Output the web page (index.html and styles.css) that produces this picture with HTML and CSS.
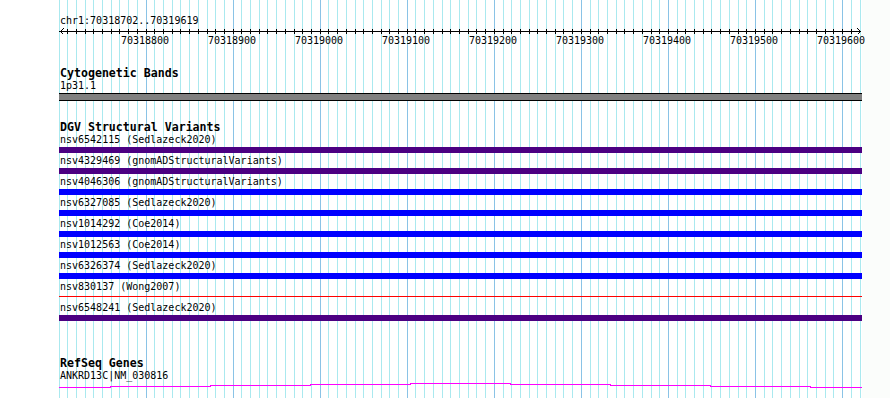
FILE: index.html
```html
<!DOCTYPE html>
<html>
<head>
<meta charset="utf-8">
<title>Genome browser</title>
<link rel="stylesheet" href="styles.css">
</head>
<body>
<div class="panel">
  <svg class="grid" width="862" height="398" viewBox="0 0 862 398" shape-rendering="crispEdges">
    <g class="minor">
      <rect x="59" width="1" height="398"/><rect x="67" width="1" height="398"/><rect x="76" width="1" height="398"/><rect x="85" width="1" height="398"/><rect x="93" width="1" height="398"/><rect x="102" width="1" height="398"/><rect x="111" width="1" height="398"/><rect x="119" width="1" height="398"/><rect x="128" width="1" height="398"/><rect x="137" width="1" height="398"/>
      <rect x="154" width="1" height="398"/><rect x="163" width="1" height="398"/><rect x="172" width="1" height="398"/><rect x="180" width="1" height="398"/><rect x="189" width="1" height="398"/><rect x="198" width="1" height="398"/><rect x="207" width="1" height="398"/><rect x="215" width="1" height="398"/><rect x="224" width="1" height="398"/>
      <rect x="241" width="1" height="398"/><rect x="250" width="1" height="398"/><rect x="259" width="1" height="398"/><rect x="267" width="1" height="398"/><rect x="276" width="1" height="398"/><rect x="285" width="1" height="398"/><rect x="294" width="1" height="398"/><rect x="302" width="1" height="398"/><rect x="311" width="1" height="398"/>
      <rect x="328" width="1" height="398"/><rect x="337" width="1" height="398"/><rect x="346" width="1" height="398"/><rect x="355" width="1" height="398"/><rect x="363" width="1" height="398"/><rect x="372" width="1" height="398"/><rect x="381" width="1" height="398"/><rect x="389" width="1" height="398"/><rect x="398" width="1" height="398"/>
      <rect x="415" width="1" height="398"/><rect x="424" width="1" height="398"/><rect x="433" width="1" height="398"/><rect x="442" width="1" height="398"/><rect x="450" width="1" height="398"/><rect x="459" width="1" height="398"/><rect x="468" width="1" height="398"/><rect x="476" width="1" height="398"/><rect x="485" width="1" height="398"/>
      <rect x="503" width="1" height="398"/><rect x="511" width="1" height="398"/><rect x="520" width="1" height="398"/><rect x="529" width="1" height="398"/><rect x="537" width="1" height="398"/><rect x="546" width="1" height="398"/><rect x="555" width="1" height="398"/><rect x="563" width="1" height="398"/><rect x="572" width="1" height="398"/>
      <rect x="590" width="1" height="398"/><rect x="598" width="1" height="398"/><rect x="607" width="1" height="398"/><rect x="616" width="1" height="398"/><rect x="624" width="1" height="398"/><rect x="633" width="1" height="398"/><rect x="642" width="1" height="398"/><rect x="651" width="1" height="398"/><rect x="659" width="1" height="398"/>
      <rect x="677" width="1" height="398"/><rect x="685" width="1" height="398"/><rect x="694" width="1" height="398"/><rect x="703" width="1" height="398"/><rect x="711" width="1" height="398"/><rect x="720" width="1" height="398"/><rect x="729" width="1" height="398"/><rect x="738" width="1" height="398"/><rect x="746" width="1" height="398"/>
      <rect x="764" width="1" height="398"/><rect x="772" width="1" height="398"/><rect x="781" width="1" height="398"/><rect x="790" width="1" height="398"/><rect x="799" width="1" height="398"/><rect x="807" width="1" height="398"/><rect x="816" width="1" height="398"/><rect x="825" width="1" height="398"/><rect x="833" width="1" height="398"/>
      <rect x="851" width="1" height="398"/><rect x="860" width="1" height="398"/>
    </g>
    <g class="major">
      <rect x="146" width="1" height="398"/><rect x="233" width="1" height="398"/><rect x="320" width="1" height="398"/><rect x="407" width="1" height="398"/><rect x="494" width="1" height="398"/><rect x="581" width="1" height="398"/><rect x="668" width="1" height="398"/><rect x="755" width="1" height="398"/><rect x="842" width="1" height="398"/>
    </g>
  </svg>

  <div class="tracks">
    <div class="locus">chr1:70318702..70319619</div>
    <svg class="ruler" width="862" height="22" viewBox="0 0 862 22" shape-rendering="crispEdges">
      <rect class="axis" x="59" y="4" width="802" height="1"/>
      <g class="ticks">
        <rect x="67" y="2" width="1" height="5"/><rect x="76" y="2" width="1" height="5"/><rect x="85" y="2" width="1" height="5"/><rect x="93" y="2" width="1" height="5"/><rect x="102" y="2" width="1" height="5"/><rect x="111" y="2" width="1" height="5"/><rect x="119" y="2" width="1" height="5"/><rect x="128" y="2" width="1" height="5"/><rect x="137" y="2" width="1" height="5"/><rect x="146" y="2" width="1" height="5"/>
        <rect x="154" y="2" width="1" height="5"/><rect x="163" y="2" width="1" height="5"/><rect x="172" y="2" width="1" height="5"/><rect x="180" y="2" width="1" height="5"/><rect x="189" y="2" width="1" height="5"/><rect x="198" y="2" width="1" height="5"/><rect x="207" y="2" width="1" height="5"/><rect x="215" y="2" width="1" height="5"/><rect x="224" y="2" width="1" height="5"/><rect x="233" y="2" width="1" height="5"/>
        <rect x="241" y="2" width="1" height="5"/><rect x="250" y="2" width="1" height="5"/><rect x="259" y="2" width="1" height="5"/><rect x="267" y="2" width="1" height="5"/><rect x="276" y="2" width="1" height="5"/><rect x="285" y="2" width="1" height="5"/><rect x="294" y="2" width="1" height="5"/><rect x="302" y="2" width="1" height="5"/><rect x="311" y="2" width="1" height="5"/><rect x="320" y="2" width="1" height="5"/>
        <rect x="328" y="2" width="1" height="5"/><rect x="337" y="2" width="1" height="5"/><rect x="346" y="2" width="1" height="5"/><rect x="355" y="2" width="1" height="5"/><rect x="363" y="2" width="1" height="5"/><rect x="372" y="2" width="1" height="5"/><rect x="381" y="2" width="1" height="5"/><rect x="389" y="2" width="1" height="5"/><rect x="398" y="2" width="1" height="5"/><rect x="407" y="2" width="1" height="5"/>
        <rect x="415" y="2" width="1" height="5"/><rect x="424" y="2" width="1" height="5"/><rect x="433" y="2" width="1" height="5"/><rect x="442" y="2" width="1" height="5"/><rect x="450" y="2" width="1" height="5"/><rect x="459" y="2" width="1" height="5"/><rect x="468" y="2" width="1" height="5"/><rect x="476" y="2" width="1" height="5"/><rect x="485" y="2" width="1" height="5"/><rect x="494" y="2" width="1" height="5"/>
        <rect x="503" y="2" width="1" height="5"/><rect x="511" y="2" width="1" height="5"/><rect x="520" y="2" width="1" height="5"/><rect x="529" y="2" width="1" height="5"/><rect x="537" y="2" width="1" height="5"/><rect x="546" y="2" width="1" height="5"/><rect x="555" y="2" width="1" height="5"/><rect x="563" y="2" width="1" height="5"/><rect x="572" y="2" width="1" height="5"/><rect x="581" y="2" width="1" height="5"/>
        <rect x="590" y="2" width="1" height="5"/><rect x="598" y="2" width="1" height="5"/><rect x="607" y="2" width="1" height="5"/><rect x="616" y="2" width="1" height="5"/><rect x="624" y="2" width="1" height="5"/><rect x="633" y="2" width="1" height="5"/><rect x="642" y="2" width="1" height="5"/><rect x="651" y="2" width="1" height="5"/><rect x="659" y="2" width="1" height="5"/><rect x="668" y="2" width="1" height="5"/>
        <rect x="677" y="2" width="1" height="5"/><rect x="685" y="2" width="1" height="5"/><rect x="694" y="2" width="1" height="5"/><rect x="703" y="2" width="1" height="5"/><rect x="711" y="2" width="1" height="5"/><rect x="720" y="2" width="1" height="5"/><rect x="729" y="2" width="1" height="5"/><rect x="738" y="2" width="1" height="5"/><rect x="746" y="2" width="1" height="5"/><rect x="755" y="2" width="1" height="5"/>
        <rect x="764" y="2" width="1" height="5"/><rect x="772" y="2" width="1" height="5"/><rect x="781" y="2" width="1" height="5"/><rect x="790" y="2" width="1" height="5"/><rect x="799" y="2" width="1" height="5"/><rect x="807" y="2" width="1" height="5"/><rect x="816" y="2" width="1" height="5"/><rect x="825" y="2" width="1" height="5"/><rect x="833" y="2" width="1" height="5"/><rect x="842" y="2" width="1" height="5"/>
        <rect x="851" y="2" width="1" height="5"/>
      </g>
      <polyline class="arrow" points="63.5,1.5 60.5,4.5 63.5,7.5"/>
      <polyline class="arrow" points="857.5,1.5 860.5,4.5 857.5,7.5"/>
      <g class="tick-labels">
        <text x="145" y="17">70318800</text>
        <text x="232" y="17">70318900</text>
        <text x="319" y="17">70319000</text>
        <text x="406" y="17">70319100</text>
        <text x="493" y="17">70319200</text>
        <text x="580" y="17">70319300</text>
        <text x="667" y="17">70319400</text>
        <text x="754" y="17">70319500</text>
        <text x="841" y="17">70319600</text>
      </g>
    </svg>

    <section class="track cyto">
      <div class="title">Cytogenetic Bands</div>
      <div class="label">1p31.1</div>
      <div class="band-bar"></div>
    </section>

    <section class="track dgv">
      <div class="title">DGV Structural Variants</div>
      <div class="sv-list">
        <div class="sv"><div class="label">nsv6542115 (Sedlazeck2020)</div><div class="bar indigo"></div></div>
        <div class="sv"><div class="label">nsv4329469 (gnomADStructuralVariants)</div><div class="bar indigo"></div></div>
        <div class="sv"><div class="label">nsv4046306 (gnomADStructuralVariants)</div><div class="bar blue"></div></div>
        <div class="sv"><div class="label">nsv6327085 (Sedlazeck2020)</div><div class="bar blue"></div></div>
        <div class="sv"><div class="label">nsv1014292 (Coe2014)</div><div class="bar blue"></div></div>
        <div class="sv"><div class="label">nsv1012563 (Coe2014)</div><div class="bar blue"></div></div>
        <div class="sv"><div class="label">nsv6326374 (Sedlazeck2020)</div><div class="bar blue"></div></div>
        <div class="sv"><div class="label">nsv830137 (Wong2007)</div><div class="bar thin"><div class="thin-line"></div></div></div>
        <div class="sv"><div class="label">nsv6548241 (Sedlazeck2020)</div><div class="bar indigo"></div></div>
      </div>
    </section>

    <section class="track refseq">
      <div class="title">RefSeq Genes</div>
      <div class="label">ANKRD13C|NM_030816</div>
      <svg class="gene" width="862" height="8" viewBox="0 0 862 8" shape-rendering="crispEdges">
        <g class="intron">
          <rect x="59" y="5" width="52" height="1"/>
          <rect x="110" y="4" width="101" height="1"/>
          <rect x="210" y="3" width="101" height="1"/>
          <rect x="310" y="2" width="101" height="1"/>
          <rect x="410" y="1" width="101" height="1"/>
          <rect x="510" y="2" width="101" height="1"/>
          <rect x="610" y="3" width="101" height="1"/>
          <rect x="710" y="4" width="101" height="1"/>
          <rect x="810" y="5" width="52" height="1"/>
        </g>
      </svg>
    </section>
  </div>
</div>
</body>
</html>
```

FILE: styles.css
```css
html, body {
  margin: 0;
  padding: 0;
}

body {
  background: #fbfdfb;
  color: #000;
  font-family: "DejaVu Sans Mono", "Liberation Mono", monospace;
  font-size: 10px;
}

.panel {
  position: relative;
  width: 862px;
  height: 398px;
  background: #ffffff;
}

.grid {
  position: absolute;
  left: 0;
  top: 0;
  display: block;
}

.grid .minor {
  fill: #aae9ef;
}

.grid .major {
  fill: #8ac3e6;
}

.tracks {
  position: relative;
  z-index: 1;
}

.locus {
  padding: 15px 0 0 60px;
  height: 12px;
  line-height: 12px;
  white-space: nowrap;
}

.ruler {
  display: block;
  overflow: visible;
}

.ruler .axis,
.ruler .ticks {
  fill: #000;
}

.ruler .arrow {
  fill: none;
  stroke: #000;
  stroke-width: 1;
}

.ruler .tick-labels text {
  font-family: "DejaVu Sans Mono", "Liberation Mono", monospace;
  font-size: 10px;
  text-anchor: middle;
  fill: #000;
}

.title {
  padding-left: 60px;
  height: 13px;
  font-size: 11.6px;
  line-height: 13px;
  font-weight: bold;
  white-space: nowrap;
}

.label {
  padding-left: 60px;
  height: 12px;
  line-height: 12px;
  white-space: nowrap;
}

.cyto {
  margin-top: 18px;
}

.band-bar {
  box-sizing: border-box;
  margin: 1px 0 0 59px;
  width: 803px;
  height: 8px;
  background: #808080;
  border-top: 1px solid #000;
  border-bottom: 1px solid #000;
}

.dgv {
  margin-top: 20px;
}

.sv-list {
  display: flex;
  flex-direction: column;
  gap: 2px;
}

.sv {
  display: flex;
  flex-direction: column;
  gap: 1px;
}

.bar {
  margin-left: 59px;
  width: 803px;
  height: 6px;
}

.bar.indigo {
  background: #4b0082;
}

.bar.blue {
  background: #0000ff;
}

.bar.thin {
  padding-top: 2px;
  box-sizing: border-box;
}

.thin-line {
  height: 1px;
  background: #ff0000;
}

.refseq {
  margin-top: 36px;
}

.gene {
  display: block;
}

.gene .intron {
  fill: #ff00ff;
}
```
